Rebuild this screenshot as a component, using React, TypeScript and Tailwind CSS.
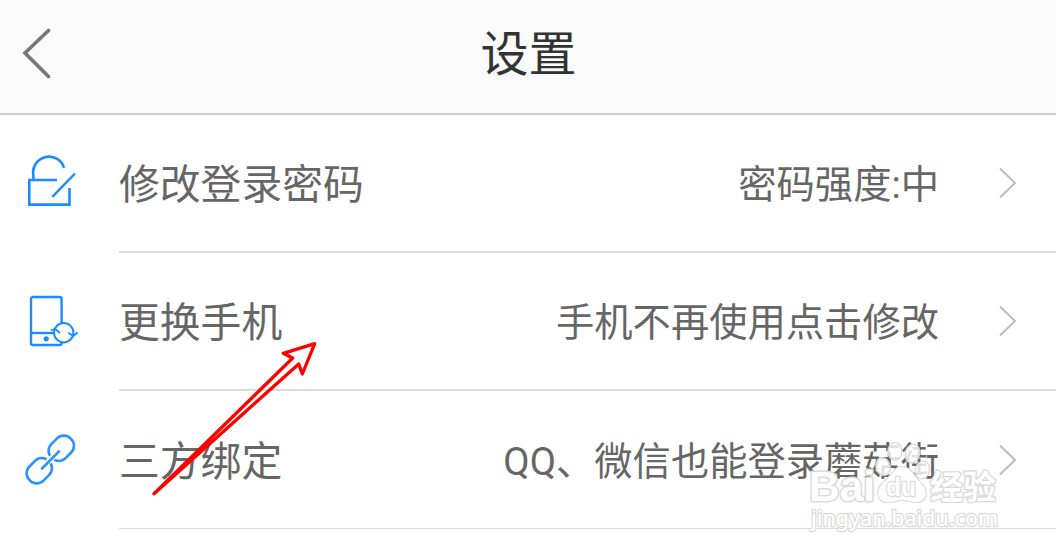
import type { ReactNode } from "react";

const LockIcon = () => (
  <svg width="56" height="56" viewBox="0 0 56 56" fill="none" stroke="#1a8cff" strokeWidth="2.6">
    <path d="M33 25H5.3V49.6H45.5V33" />
    <path d="M9.4 26V20.5A15.8 15.8 0 0 1 40 12.8" />
    <path d="M51 18.5L28.3 41.8" strokeWidth="2.4" />
  </svg>
);

const PhoneIcon = () => (
  <svg width="56" height="56" viewBox="0 0 56 56" fill="none" stroke="#1a8cff" strokeWidth="2.4">
    <rect x="7" y="4" width="30.6" height="48" rx="2" />
    <path d="M7 40H30" />
    <circle cx="22.2" cy="45.8" r="2.6" fill="#1a8cff" stroke="none" />
    <circle cx="39.7" cy="39.7" r="9.7" fill="#fff" strokeWidth="2" />
    <path d="M27 37.2L31.3 36L36 40M44.3 39.7L49.3 43L53.7 39.2" strokeWidth="1.8" />
  </svg>
);

const LinkIcon = () => (
  <svg width="56" height="56" viewBox="0 0 56 56" fill="none" stroke="#2b92f7" strokeWidth="2.6">
    <rect x="23.8" y="7.3" width="27" height="20" rx="9.5" transform="rotate(-45 37.3 17.3)" />
    <rect x="1.8" y="29.7" width="27" height="20" rx="9.5" transform="rotate(-45 15.3 39.7)" />
    <path d="M24 31L29 26" stroke="#fff" strokeWidth="6" />
    <path d="M35 20.3L18 37.5" strokeLinecap="round" />
  </svg>
);

const ChevronRight = () => (
  <svg width="20" height="32" viewBox="0 0 20 32" fill="none" stroke="#bbb" strokeWidth="2">
    <path d="M3 1.5L18 16L3 30.5" />
  </svg>
);

interface SettingRowProps {
  icon: ReactNode;
  title: string;
  value: string;
}

function SettingRow({ icon, title, value }: SettingRowProps) {
  return (
    <div className="group flex h-[138px] pl-6">
      <div className="flex h-[136px] w-[95px] shrink-0 items-center">{icon}</div>
      <div className="flex flex-1 items-center justify-between border-b-2 border-[#dcdcdc] pr-[39px] text-[#666] group-last:border-b">
        <h2 className="pt-1 text-[40.8px] leading-[48px]">{title}</h2>
        <div className="flex items-center gap-[58px]">
          <p className="pt-1 text-[38.3px] leading-[48px]">{value}</p>
          <ChevronRight />
        </div>
      </div>
    </div>
  );
}

function PointerArrow() {
  return (
    <svg
      className="pointer-events-none absolute top-[336px] left-[146px]"
      width="180"
      height="166"
      viewBox="146 336 180 166"
    >
      <path
        d="M154 493.7L292.7 358L283.3 353.3L314.7 343.7L302.3 374L298.7 364Z"
        fill="none"
        stroke="#f00"
        strokeWidth="3.3"
        strokeLinejoin="round"
      />
    </svg>
  );
}

function Watermark() {
  return (
    <svg
      className="pointer-events-none absolute top-[436px] left-[800px] [paint-order:stroke]"
      width="210"
      height="106"
      viewBox="800 436 210 106"
      fill="#fff"
      stroke="#dadada"
      strokeWidth="3"
      strokeLinejoin="round"
    >
      <text x="809" y="501" textLength="66" lengthAdjust="spacingAndGlyphs" className="font-['Liberation_Sans'] text-[42px] font-bold">
        Bai
      </text>
      <g fillOpacity="0.8" strokeWidth="1.4" className="[paint-order:normal]">
        <ellipse cx="895" cy="451.5" rx="7" ry="9" />
        <ellipse cx="912.5" cy="453.5" rx="7" ry="9.5" transform="rotate(15 912.5 453.5)" />
        <ellipse cx="883" cy="466.5" rx="7" ry="9" transform="rotate(-15 883 466.5)" />
        <ellipse cx="922.5" cy="470" rx="7" ry="9" transform="rotate(15 922.5 470)" />
      </g>
      <path
        d="M902 467C894 467 892 476 885 481C875 489 876 502 888 502C894 502 897 500 902 500C907 500 911 502 916 502C928 502 928 490 920 482C913 476 911 467 902 467Z"
        strokeWidth="2.2"
      />
      <text x="886" y="496" textLength="30" lengthAdjust="spacingAndGlyphs" strokeWidth="2.4" className="font-['Liberation_Sans'] text-[25px] font-bold">
        du
      </text>
      <text x="930" y="499" strokeWidth="2.6" className="font-['Noto_Sans_CJK_SC',sans-serif] text-[33px] font-bold">
        经验
      </text>
      <text x="811" y="526" textLength="187" lengthAdjust="spacingAndGlyphs" strokeWidth="2.4" className="font-['Noto_Sans'] text-[21.5px] font-medium">
        jingyan.baidu.com
      </text>
    </svg>
  );
}

export default function App() {
  return (
    <div className="relative h-[556px] w-[1056px] overflow-hidden bg-white font-[Roboto,'Noto_Sans_CJK_SC',sans-serif]">
      <header className="grid h-[115px] grid-cols-[100px_1fr_100px] items-center border-b-2 border-[#ccc] bg-[#fafafa] pb-[6px]">
        <svg className="ml-5" width="34" height="52" viewBox="0 0 34 52" fill="none" stroke="#777" strokeWidth="3.6" strokeLinecap="round">
          <path d="M28.5 2.5L5 25L28.5 48.5" />
        </svg>
        <h1 className="pt-[3px] pl-px text-center text-[48px] leading-[56px] text-[#333]">设置</h1>
      </header>
      <main>
        <SettingRow icon={<LockIcon />} title="修改登录密码" value="密码强度:中" />
        <SettingRow icon={<PhoneIcon />} title="更换手机" value="手机不再使用点击修改" />
        <SettingRow icon={<LinkIcon />} title="三方绑定" value="QQ、微信也能登录蘑菇街" />
      </main>
      <PointerArrow />
      <Watermark />
    </div>
  );
}
